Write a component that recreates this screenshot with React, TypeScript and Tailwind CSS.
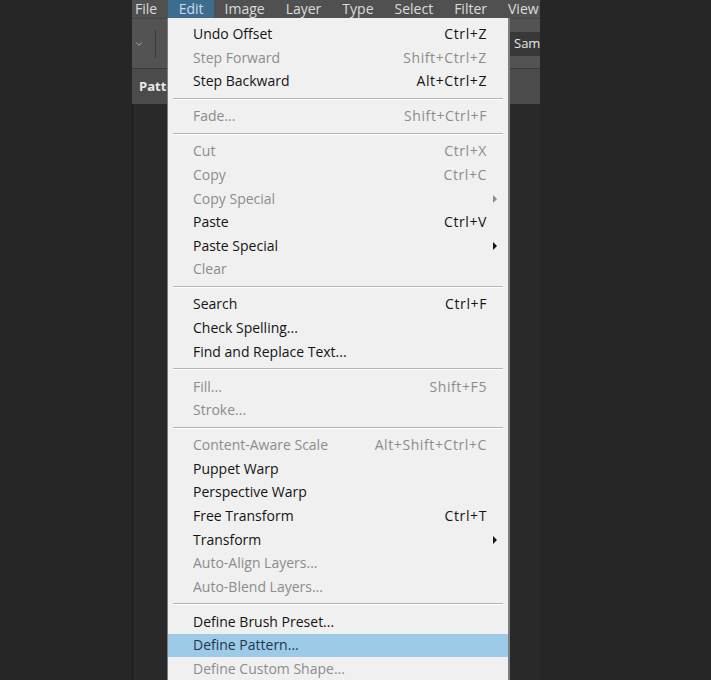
import { ChevronDown } from "lucide-react";

type Item = {
  label: string;
  shortcut?: string;
  disabled?: boolean;
  submenu?: boolean;
  active?: boolean;
};

const groups: Item[][] = [
  [
    { label: "Undo Offset", shortcut: "Ctrl+Z" },
    { label: "Step Forward", shortcut: "Shift+Ctrl+Z", disabled: true },
    { label: "Step Backward", shortcut: "Alt+Ctrl+Z" },
  ],
  [{ label: "Fade...", shortcut: "Shift+Ctrl+F", disabled: true }],
  [
    { label: "Cut", shortcut: "Ctrl+X", disabled: true },
    { label: "Copy", shortcut: "Ctrl+C", disabled: true },
    { label: "Copy Special", disabled: true, submenu: true },
    { label: "Paste", shortcut: "Ctrl+V" },
    { label: "Paste Special", submenu: true },
    { label: "Clear", disabled: true },
  ],
  [
    { label: "Search", shortcut: "Ctrl+F" },
    { label: "Check Spelling..." },
    { label: "Find and Replace Text..." },
  ],
  [
    { label: "Fill...", shortcut: "Shift+F5", disabled: true },
    { label: "Stroke...", disabled: true },
  ],
  [
    { label: "Content-Aware Scale", shortcut: "Alt+Shift+Ctrl+C", disabled: true },
    { label: "Puppet Warp" },
    { label: "Perspective Warp" },
    { label: "Free Transform", shortcut: "Ctrl+T" },
    { label: "Transform", submenu: true },
    { label: "Auto-Align Layers...", disabled: true },
    { label: "Auto-Blend Layers...", disabled: true },
  ],
  [
    { label: "Define Brush Preset..." },
    { label: "Define Pattern...", active: true },
    { label: "Define Custom Shape...", disabled: true },
  ],
];

const menuBar = ["File", "Edit", "Image", "Layer", "Type", "Select", "Filter", "View"];

function MenuRow({ item }: { item: Item }) {
  const color = item.active
    ? "text-[#1f3550]"
    : item.disabled
    ? "text-[#8c8c8c]"
    : "text-[#141414]";
  return (
    <div
      className={`relative flex items-center h-[23.6px] pl-[25px] pr-[21px] ${color} ${
        item.active ? "bg-[#9dcae6]" : ""
      }`}
    >
      <span className="flex-1">{item.label}</span>
      {item.shortcut && <span className="tracking-[0.6px]">{item.shortcut}</span>}
      {item.submenu && (
        <svg
          className="absolute right-[11px] top-[8px]"
          width="4"
          height="8"
          viewBox="0 0 4 8"
        >
          <path d="M0 0 L4 4 L0 8 Z" fill={item.disabled ? "#8c8c8c" : "#141414"} />
        </svg>
      )}
    </div>
  );
}

export default function App() {
  return (
    <div
      className="relative h-[680px] w-[711px] overflow-hidden bg-[#262626] flex"
      style={{ fontFamily: '"Open Sans", "Noto Sans", sans-serif' }}
    >
      {/* Photoshop window */}
      <div className="ml-[132px] w-[408px] flex flex-col">
        {/* menu bar */}
        <div className="h-[18px] bg-[#505050] flex items-center text-[14px] text-[#dcdcdc] leading-[18px] whitespace-nowrap">
          {menuBar.map((m, i) => (
            <div
              key={m}
              className={`h-full ${
                i === 0 ? "pl-[3px] pr-[11px]" : "px-[10.5px]"
              } ${m === "Edit" ? "bg-[#3d6d8e] text-[#c9dcea]" : ""}`}
            >
              {m}
            </div>
          ))}
        </div>

        {/* options bar */}
        <div className="h-[50px] bg-[#535353] border-t border-[#474747] flex items-center relative">
          <ChevronDown className="ml-[2px] w-[10px] h-[10px] text-[#bdbdbd]" strokeWidth={2} />
          <div className="ml-[11px] h-[28px] w-px bg-[#3a3a3a]" />
          <div className="ml-auto h-[24px] w-[30px] bg-[#383838] flex items-center pl-[4px] text-[13px] text-[#e6e6e6]">
            Sam
          </div>
        </div>

        {/* panel tab row */}
        <div className="h-[36px] bg-[#4b4b4b] border-t border-[#3a3a3a] flex items-center pl-[7px] text-[13px] font-bold text-[#e8e8e8]">
          Patte
        </div>

        {/* canvas area */}
        <div className="flex-1 bg-[#292929] border-l border-[#1d1d1d]" />
      </div>

      {/* Edit menu dropdown */}
      <div className="absolute left-[167px] top-[18px] w-[343px] bottom-0 bg-[#f0f0f0] border-l border-r-2 border-[#7d7d7d] pt-[4.5px] text-[14px] leading-none">
        {groups.map((g, gi) => (
          <div key={gi}>
            {gi > 0 && (
              <div className="h-[11.4px] flex items-center px-[5px]">
                <div className="w-full border-t border-[#b4b4b4] border-b border-b-white" />
              </div>
            )}
            {g.map((item) => (
              <MenuRow key={item.label} item={item} />
            ))}
          </div>
        ))}
      </div>
    </div>
  );
}
